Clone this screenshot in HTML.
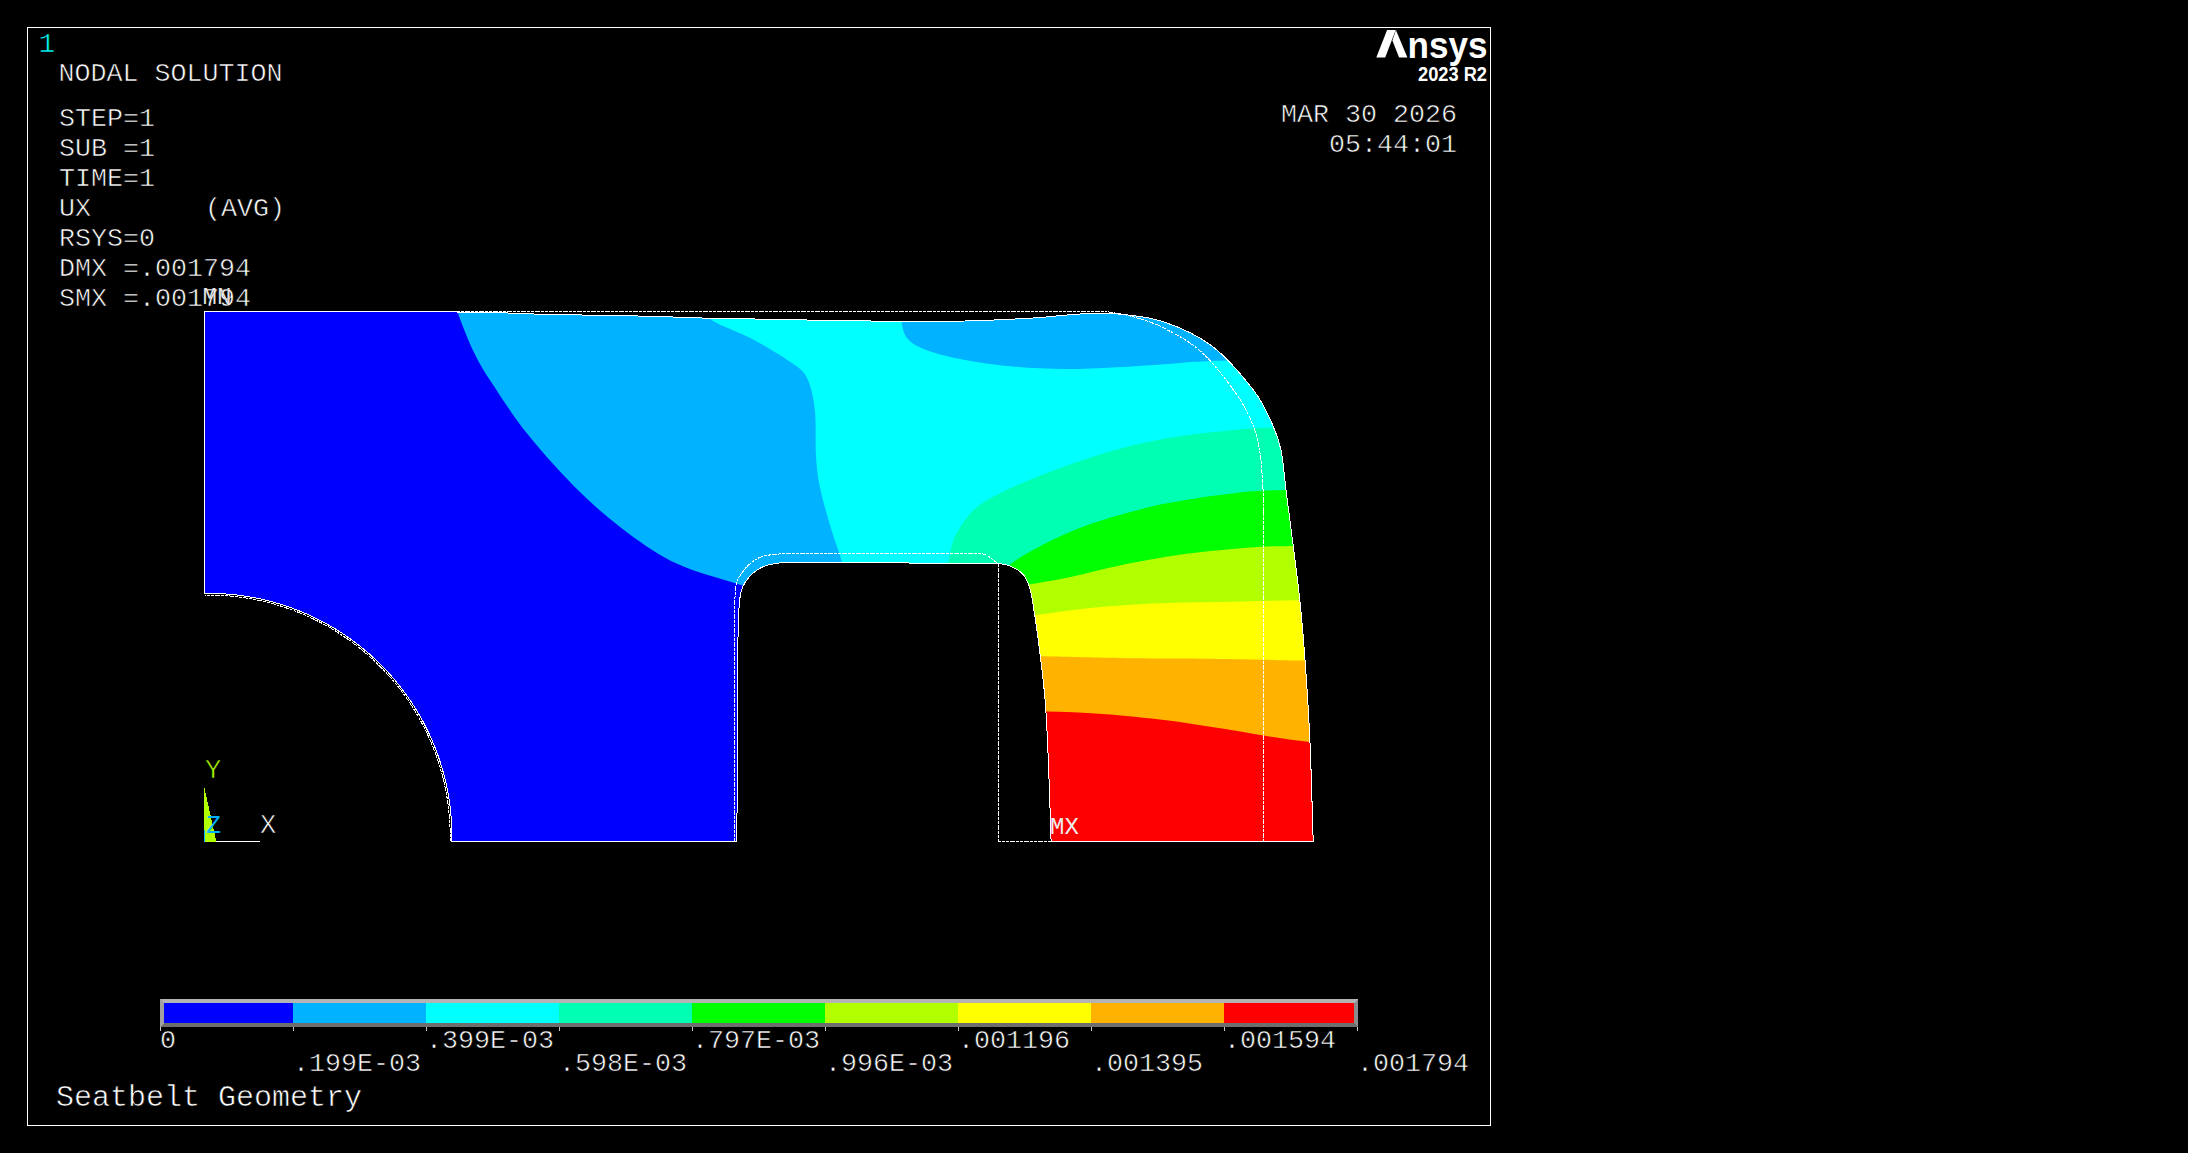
<!DOCTYPE html>
<html><head><meta charset="utf-8">
<style>
html,body{margin:0;padding:0;background:#000;width:2188px;height:1153px;overflow:hidden}
svg{position:absolute;left:0;top:0;display:block}
text{font-family:"Liberation Mono",monospace;white-space:pre;fill:#fff;stroke:#000;stroke-width:0.6px}
.t{font-size:26.67px}
.ns{stroke:none}
</style></head><body>
<svg width="2188" height="1153" viewBox="0 0 2188 1153" shape-rendering="crispEdges">
<rect x="0" y="0" width="2188" height="1153" fill="#000"/>
<rect x="27.5" y="27.5" width="1463" height="1098" fill="none" stroke="#fff" stroke-width="1"/>

<defs><clipPath id="cp"><path d="M204.50,311.50 C246.58,311.58 400.42,311.53 457.00,312.00 C513.58,312.47 513.00,313.62 544.00,314.30 C575.00,314.98 615.50,315.45 643.00,316.10 C670.50,316.75 685.17,317.63 709.00,318.20 C732.83,318.77 764.17,319.07 786.00,319.50 C807.83,319.93 821.00,320.52 840.00,320.80 C859.00,321.08 879.17,321.17 900.00,321.20 C920.83,321.23 942.83,321.53 965.00,321.00 C987.17,320.47 1013.83,319.17 1033.00,318.00 C1052.17,316.83 1065.83,314.67 1080.00,314.00 C1094.17,313.33 1104.12,312.72 1118.00,314.00 C1131.88,315.28 1147.65,316.37 1163.30,321.70 C1178.95,327.03 1196.87,334.58 1211.90,346.00 C1226.93,357.42 1243.38,377.05 1253.50,390.20 C1263.62,403.35 1267.98,414.78 1272.60,424.90 C1277.22,435.02 1278.97,440.05 1281.20,450.90 C1283.43,461.75 1284.00,474.17 1286.00,490.00 C1288.00,505.83 1290.87,527.25 1293.20,545.90 C1295.53,564.55 1298.03,582.97 1300.00,601.90 C1301.97,620.83 1303.35,636.43 1305.00,659.50 C1306.65,682.57 1308.53,710.05 1309.90,740.30 C1311.27,770.55 1312.65,824.22 1313.20,841.00 L1051.10,841.00 C1050.65,827.85 1049.32,784.52 1048.40,762.10 C1047.48,739.68 1046.77,722.70 1045.60,706.50 C1044.43,690.30 1043.02,678.77 1041.40,664.90 C1039.78,651.03 1037.75,635.78 1035.90,623.30 C1034.05,610.82 1032.38,598.10 1030.30,590.00 C1028.22,581.90 1026.63,578.63 1023.40,574.70 C1020.17,570.77 1015.30,568.30 1010.90,566.40 C1006.50,564.50 1005.48,563.83 997.00,563.30 C988.52,562.77 966.17,563.22 960.00,563.20 L800.00,562.60 C797.22,562.58 789.33,561.87 783.30,562.50 C777.27,563.13 769.35,564.13 763.80,566.40 C758.25,568.67 753.70,572.17 750.00,576.10 C746.30,580.03 743.45,584.45 741.60,590.00 C739.75,595.55 739.53,599.40 738.90,609.40 C738.27,619.40 738.03,633.82 737.80,650.00 C737.57,666.18 737.65,674.67 737.50,706.50 C737.35,738.33 737.00,818.58 736.90,841.00 L451.86,841.00 L451.90,837.74 L451.89,834.49 L451.84,831.23 L451.75,827.98 L451.61,824.73 L451.43,821.48 L451.21,818.23 L450.94,814.99 L450.63,811.75 L450.27,808.51 L449.87,805.28 L449.43,802.06 L448.95,798.84 L448.42,795.62 L447.85,792.42 L447.24,789.22 L446.59,786.03 L445.89,782.85 L445.15,779.68 L444.36,776.53 L443.54,773.38 L442.67,770.24 L441.76,767.11 L440.81,764.00 L439.82,760.90 L438.78,757.81 L437.71,754.74 L436.59,751.68 L435.44,748.64 L434.24,745.61 L433.00,742.60 L431.72,739.61 L430.40,736.63 L429.05,733.67 L427.65,730.74 L426.21,727.81 L424.74,724.91 L423.22,722.03 L421.67,719.17 L420.08,716.33 L418.45,713.51 L416.78,710.72 L415.08,707.94 L413.34,705.19 L411.56,702.46 L409.75,699.76 L407.90,697.08 L406.02,694.43 L404.10,691.80 L402.14,689.20 L400.15,686.62 L398.12,684.07 L396.07,681.55 L393.97,679.06 L391.85,676.59 L389.69,674.15 L387.50,671.75 L385.28,669.37 L383.02,667.02 L380.74,664.70 L378.42,662.42 L376.08,660.16 L373.70,657.93 L371.29,655.74 L368.86,653.58 L366.39,651.46 L363.90,649.36 L361.38,647.30 L358.84,645.27 L356.26,643.28 L353.66,641.32 L351.03,639.40 L348.38,637.51 L345.70,635.66 L343.00,633.85 L340.28,632.07 L337.53,630.32 L334.76,628.62 L331.96,626.95 L329.14,625.32 L326.30,623.73 L323.45,622.17 L320.57,620.65 L317.66,619.18 L314.74,617.74 L311.81,616.34 L308.85,614.98 L305.87,613.66 L302.88,612.38 L299.87,611.14 L296.85,609.94 L293.80,608.78 L290.75,607.66 L287.68,606.58 L284.59,605.54 L281.49,604.55 L278.38,603.60 L275.25,602.68 L272.12,601.81 L268.97,600.99 L265.81,600.20 L262.64,599.46 L259.46,598.76 L256.27,598.10 L253.08,597.48 L249.87,596.91 L246.66,596.38 L243.44,595.89 L240.22,595.45 L236.99,595.05 L233.75,594.69 L230.51,594.38 L227.27,594.11 L224.02,593.88 L220.77,593.70 L217.52,593.56 L214.27,593.46 L211.01,593.41 L207.76,593.40 L204.50,593.44 Z"/></clipPath></defs>
<g clip-path="url(#cp)" shape-rendering="geometricPrecision">
<rect x="200" y="300" width="1130" height="550" fill="#0000ff"/>
<path fill="#00b2ff" d="M457.70,305.00 C457.70,306.25 455.02,304.67 457.70,312.50 C460.38,320.33 468.08,340.20 473.80,352.00 C479.52,363.80 482.88,369.42 492.00,383.30 C501.12,397.18 513.83,417.17 528.50,435.30 C543.17,453.43 563.32,475.75 580.00,492.10 C596.68,508.45 612.42,521.45 628.60,533.40 C644.78,545.35 659.30,555.50 677.10,563.80 C694.90,572.10 721.58,578.83 735.40,583.20 C749.22,587.57 755.90,588.87 760.00,590.00 L760.00,900.00 L1400.00,900.00 L1400.00,305.00 Z"/>
<path fill="#00ffff" d="M709.40,300.00 C709.40,303.03 702.25,311.70 709.40,318.20 C716.55,324.70 738.65,331.62 752.30,339.00 C765.95,346.38 782.18,356.00 791.30,362.50 C800.42,369.00 803.08,370.20 807.00,378.00 C810.92,385.80 813.30,396.28 814.80,409.30 C816.30,422.32 815.13,443.08 816.00,456.10 C816.87,469.12 817.60,475.68 820.00,487.40 C822.40,499.12 827.15,515.35 830.40,526.40 C833.65,537.45 837.57,547.60 839.50,553.70 C841.43,559.80 841.08,558.62 842.00,563.00 C842.92,567.38 844.50,577.17 845.00,580.00 L845.00,900.00 L1400.00,900.00 L1400.00,359.00 C1371.55,359.25 1267.93,359.68 1229.30,360.50 C1190.67,361.32 1187.05,362.77 1168.20,363.90 C1149.35,365.03 1133.55,366.43 1116.20,367.30 C1098.85,368.17 1081.45,369.23 1064.10,369.10 C1046.75,368.97 1028.57,368.02 1012.10,366.50 C995.63,364.98 979.17,362.58 965.30,360.00 C951.43,357.42 938.45,354.47 928.90,351.00 C919.35,347.53 912.57,344.20 908.00,339.20 C903.43,334.20 902.58,327.53 901.50,321.00 C900.42,314.47 901.50,303.50 901.50,300.00 Z"/>
<path fill="#00ffb2" d="M945.00,580.00 C945.57,577.17 946.75,570.18 948.40,563.00 C950.05,555.82 950.35,546.02 954.90,536.90 C959.45,527.78 966.17,516.53 975.70,508.30 C985.23,500.07 997.37,494.43 1012.10,487.50 C1026.83,480.57 1046.75,472.98 1064.10,466.70 C1081.45,460.42 1098.85,454.57 1116.20,449.80 C1133.55,445.03 1150.87,441.13 1168.20,438.10 C1185.53,435.07 1202.52,433.37 1220.20,431.60 C1237.88,429.83 1244.33,428.43 1274.30,427.50 C1304.27,426.57 1379.05,426.25 1400.00,426.00 L1400.00,900.00 L945.00,900.00 Z"/>
<path fill="#00ff00" d="M1000.00,575.00 C1002.02,573.00 1005.75,567.62 1012.10,563.00 C1018.45,558.38 1027.27,552.95 1038.10,547.30 C1048.93,541.65 1064.08,534.30 1077.10,529.10 C1090.12,523.90 1101.02,520.43 1116.20,516.10 C1131.38,511.77 1148.55,506.92 1168.20,503.10 C1187.85,499.28 1214.33,495.40 1234.10,493.20 C1253.87,491.00 1259.15,490.60 1286.80,489.90 C1314.45,489.20 1381.13,489.15 1400.00,489.00 L1400.00,900.00 L1000.00,900.00 Z"/>
<path fill="#b2ff00" d="M1000.00,590.00 C1004.83,589.08 1017.43,586.63 1029.00,584.50 C1040.57,582.37 1054.43,580.33 1069.40,577.20 C1084.37,574.07 1099.58,569.55 1118.80,565.70 C1138.02,561.85 1162.73,557.13 1184.70,554.10 C1206.67,551.07 1232.48,548.87 1250.60,547.50 C1268.72,546.13 1268.50,546.32 1293.40,545.90 C1318.30,545.48 1382.23,545.15 1400.00,545.00 L1400.00,900.00 L1000.00,900.00 Z"/>
<path fill="#ffff00" d="M1000.00,616.00 C1005.80,615.83 1020.48,616.25 1034.80,615.00 C1049.12,613.75 1066.40,610.42 1085.90,608.50 C1105.40,606.58 1129.83,604.60 1151.80,603.50 C1173.77,602.40 1193.00,602.45 1217.70,601.90 C1242.40,601.35 1269.62,600.52 1300.00,600.20 C1330.38,599.88 1383.33,600.03 1400.00,600.00 L1400.00,900.00 L1000.00,900.00 Z"/>
<path fill="#ffb200" d="M1000.00,656.00 C1006.73,656.03 1020.60,655.88 1040.40,656.20 C1060.20,656.52 1094.75,657.50 1118.80,657.90 C1142.85,658.30 1162.73,658.33 1184.70,658.60 C1206.67,658.87 1230.55,659.18 1250.60,659.50 C1270.65,659.82 1280.10,660.25 1305.00,660.50 C1329.90,660.75 1384.17,660.92 1400.00,661.00 L1400.00,900.00 L1000.00,900.00 Z"/>
<path fill="#ff0000" d="M1000.00,711.00 C1007.73,711.10 1029.33,711.12 1046.40,711.60 C1063.47,712.08 1082.10,712.42 1102.40,713.90 C1122.70,715.38 1146.25,717.75 1168.20,720.50 C1190.15,723.25 1210.48,726.83 1234.10,730.40 C1257.72,733.97 1282.25,739.80 1309.90,741.90 C1337.55,744.00 1384.98,742.82 1400.00,743.00 L1400.00,900.00 L1000.00,900.00 Z"/>
</g>
<g fill="none" stroke="#fff" stroke-width="1" shape-rendering="crispEdges">
<path d="M204.50,311.50 C246.58,311.58 400.42,311.53 457.00,312.00 C513.58,312.47 513.00,313.62 544.00,314.30 C575.00,314.98 615.50,315.45 643.00,316.10 C670.50,316.75 685.17,317.63 709.00,318.20 C732.83,318.77 764.17,319.07 786.00,319.50 C807.83,319.93 821.00,320.52 840.00,320.80 C859.00,321.08 879.17,321.17 900.00,321.20 C920.83,321.23 942.83,321.53 965.00,321.00 C987.17,320.47 1013.83,319.17 1033.00,318.00 C1052.17,316.83 1065.83,314.67 1080.00,314.00 C1094.17,313.33 1104.12,312.72 1118.00,314.00 C1131.88,315.28 1147.65,316.37 1163.30,321.70 C1178.95,327.03 1196.87,334.58 1211.90,346.00 C1226.93,357.42 1243.38,377.05 1253.50,390.20 C1263.62,403.35 1267.98,414.78 1272.60,424.90 C1277.22,435.02 1278.97,440.05 1281.20,450.90 C1283.43,461.75 1284.00,474.17 1286.00,490.00 C1288.00,505.83 1290.87,527.25 1293.20,545.90 C1295.53,564.55 1298.03,582.97 1300.00,601.90 C1301.97,620.83 1303.35,636.43 1305.00,659.50 C1306.65,682.57 1308.53,710.05 1309.90,740.30 C1311.27,770.55 1312.65,824.22 1313.20,841.00 L1051.10,841.00 C1050.65,827.85 1049.32,784.52 1048.40,762.10 C1047.48,739.68 1046.77,722.70 1045.60,706.50 C1044.43,690.30 1043.02,678.77 1041.40,664.90 C1039.78,651.03 1037.75,635.78 1035.90,623.30 C1034.05,610.82 1032.38,598.10 1030.30,590.00 C1028.22,581.90 1026.63,578.63 1023.40,574.70 C1020.17,570.77 1015.30,568.30 1010.90,566.40 C1006.50,564.50 1005.48,563.83 997.00,563.30 C988.52,562.77 966.17,563.22 960.00,563.20 L800.00,562.60 C797.22,562.58 789.33,561.87 783.30,562.50 C777.27,563.13 769.35,564.13 763.80,566.40 C758.25,568.67 753.70,572.17 750.00,576.10 C746.30,580.03 743.45,584.45 741.60,590.00 C739.75,595.55 739.53,599.40 738.90,609.40 C738.27,619.40 738.03,633.82 737.80,650.00 C737.57,666.18 737.65,674.67 737.50,706.50 C737.35,738.33 737.00,818.58 736.90,841.00 L451.86,841.00 L451.90,837.74 L451.89,834.49 L451.84,831.23 L451.75,827.98 L451.61,824.73 L451.43,821.48 L451.21,818.23 L450.94,814.99 L450.63,811.75 L450.27,808.51 L449.87,805.28 L449.43,802.06 L448.95,798.84 L448.42,795.62 L447.85,792.42 L447.24,789.22 L446.59,786.03 L445.89,782.85 L445.15,779.68 L444.36,776.53 L443.54,773.38 L442.67,770.24 L441.76,767.11 L440.81,764.00 L439.82,760.90 L438.78,757.81 L437.71,754.74 L436.59,751.68 L435.44,748.64 L434.24,745.61 L433.00,742.60 L431.72,739.61 L430.40,736.63 L429.05,733.67 L427.65,730.74 L426.21,727.81 L424.74,724.91 L423.22,722.03 L421.67,719.17 L420.08,716.33 L418.45,713.51 L416.78,710.72 L415.08,707.94 L413.34,705.19 L411.56,702.46 L409.75,699.76 L407.90,697.08 L406.02,694.43 L404.10,691.80 L402.14,689.20 L400.15,686.62 L398.12,684.07 L396.07,681.55 L393.97,679.06 L391.85,676.59 L389.69,674.15 L387.50,671.75 L385.28,669.37 L383.02,667.02 L380.74,664.70 L378.42,662.42 L376.08,660.16 L373.70,657.93 L371.29,655.74 L368.86,653.58 L366.39,651.46 L363.90,649.36 L361.38,647.30 L358.84,645.27 L356.26,643.28 L353.66,641.32 L351.03,639.40 L348.38,637.51 L345.70,635.66 L343.00,633.85 L340.28,632.07 L337.53,630.32 L334.76,628.62 L331.96,626.95 L329.14,625.32 L326.30,623.73 L323.45,622.17 L320.57,620.65 L317.66,619.18 L314.74,617.74 L311.81,616.34 L308.85,614.98 L305.87,613.66 L302.88,612.38 L299.87,611.14 L296.85,609.94 L293.80,608.78 L290.75,607.66 L287.68,606.58 L284.59,605.54 L281.49,604.55 L278.38,603.60 L275.25,602.68 L272.12,601.81 L268.97,600.99 L265.81,600.20 L262.64,599.46 L259.46,598.76 L256.27,598.10 L253.08,597.48 L249.87,596.91 L246.66,596.38 L243.44,595.89 L240.22,595.45 L236.99,595.05 L233.75,594.69 L230.51,594.38 L227.27,594.11 L224.02,593.88 L220.77,593.70 L217.52,593.56 L214.27,593.46 L211.01,593.41 L207.76,593.40 L204.50,593.44 Z"/>
<path stroke-dasharray="3,1,3,1,5,1" d="M204.5,311.5 L1106,311.5 C1110.33,312.33 1122.45,313.78 1132.00,316.50 C1141.55,319.22 1151.73,321.88 1163.30,327.80 C1174.87,333.72 1189.27,341.02 1201.40,352.00 C1213.53,362.98 1227.42,381.27 1236.10,393.70 C1244.78,406.13 1249.45,416.20 1253.50,426.60 C1257.55,437.00 1258.72,443.87 1260.40,456.10 C1262.08,468.33 1263.07,489.35 1263.60,500.00 C1264.13,510.65 1263.60,516.67 1263.60,520.00 L1263.6,841"/>
<path stroke-dasharray="3,1,3,1,5,1" d="M1051,841 L998.5,841 L998.5,575 C998.50,573.42 999.22,567.87 998.50,565.50 C997.78,563.13 996.77,562.72 994.20,560.80 C991.63,558.88 988.80,555.17 983.10,554.00 C977.40,552.83 963.85,553.83 960.00,553.80 L779,554 C776.18,554.42 766.93,554.87 762.10,556.50 C757.27,558.13 753.43,560.97 750.00,563.80 C746.57,566.63 743.73,570.27 741.50,573.50 C739.27,576.73 737.72,578.78 736.60,583.20 C735.48,587.62 735.15,594.70 734.80,600.00 C734.45,605.30 734.55,612.50 734.50,615.00 L734.5,841"/>
<path stroke-dasharray="3,1,3,1,5,1" d="M450.16,840.97 L450.20,837.74 L450.19,834.50 L450.14,831.27 L450.05,828.04 L449.91,824.81 L449.73,821.58 L449.51,818.36 L449.24,815.14 L448.94,811.92 L448.58,808.71 L448.19,805.50 L447.75,802.30 L447.27,799.10 L446.75,795.91 L446.18,792.73 L445.57,789.55 L444.92,786.39 L444.23,783.23 L443.49,780.08 L442.72,776.95 L441.90,773.82 L441.04,770.70 L440.13,767.60 L439.19,764.51 L438.20,761.43 L437.18,758.36 L436.11,755.31 L435.00,752.28 L433.85,749.26 L432.66,746.25 L431.43,743.26 L430.16,740.29 L428.85,737.33 L427.51,734.39 L426.12,731.48 L424.69,728.57 L423.23,725.69 L421.72,722.83 L420.18,719.99 L418.60,717.17 L416.98,714.37 L415.33,711.60 L413.64,708.84 L411.91,706.11 L410.15,703.40 L408.34,700.72 L406.51,698.06 L404.64,695.42 L402.73,692.81 L400.79,690.23 L398.81,687.67 L396.80,685.14 L394.76,682.64 L392.68,680.16 L390.57,677.71 L388.43,675.29 L386.25,672.90 L384.04,670.54 L381.81,668.21 L379.54,665.90 L377.24,663.63 L374.91,661.39 L372.55,659.18 L370.16,657.01 L367.74,654.86 L365.29,652.75 L362.82,650.67 L360.32,648.62 L357.79,646.61 L355.23,644.63 L352.65,642.69 L350.04,640.78 L347.41,638.91 L344.75,637.07 L342.06,635.26 L339.36,633.50 L336.63,631.77 L333.87,630.07 L331.10,628.42 L328.30,626.80 L325.48,625.21 L322.64,623.67 L319.78,622.16 L316.90,620.70 L314.00,619.27 L311.09,617.88 L308.15,616.53 L305.19,615.22 L302.22,613.94 L299.23,612.71 L296.23,611.52 L293.21,610.37 L290.17,609.26 L287.12,608.19 L284.06,607.16 L280.98,606.17 L277.89,605.22 L274.79,604.32 L271.67,603.45 L268.55,602.63 L265.41,601.85 L262.26,601.11 L259.11,600.42 L255.94,599.77 L252.77,599.15 L249.59,598.59 L246.40,598.06 L243.20,597.58 L240.00,597.14 L236.79,596.74 L233.58,596.38 L230.36,596.07 L227.14,595.80 L223.91,595.58 L220.69,595.40 L217.46,595.26 L214.23,595.16 L210.99,595.11 L207.76,595.10 L204.53,595.14"/>
</g>

<rect x="160" y="999" width="133" height="28" fill="#0000ff"/>
<rect x="293" y="999" width="133" height="28" fill="#00b2ff"/>
<rect x="426" y="999" width="133" height="28" fill="#00ffff"/>
<rect x="559" y="999" width="133" height="28" fill="#00ffb2"/>
<rect x="692" y="999" width="133" height="28" fill="#00ff00"/>
<rect x="825" y="999" width="133" height="28" fill="#b2ff00"/>
<rect x="958" y="999" width="133" height="28" fill="#ffff00"/>
<rect x="1091" y="999" width="133" height="28" fill="#ffb200"/>
<rect x="1224" y="999" width="134" height="28" fill="#ff0000"/>
<polygon fill="#b4b4b4" points="160,999 1358,999 1354,1003 164,1003"/>
<polygon fill="#a0a0a0" points="160,999 164,1003 164,1023 160,1027"/>
<polygon fill="#6e6e6e" points="160,1027 164,1023 1354,1023 1358,1027"/>
<polygon fill="#8c8c8c" points="1358,999 1354,1003 1354,1023 1358,1027"/>
<rect x="160" y="1027" width="1" height="4" fill="#c8c8c8"/>
<rect x="293" y="1027" width="1" height="4" fill="#c8c8c8"/>
<rect x="426" y="1027" width="1" height="4" fill="#c8c8c8"/>
<rect x="559" y="1027" width="1" height="4" fill="#c8c8c8"/>
<rect x="692" y="1027" width="1" height="4" fill="#c8c8c8"/>
<rect x="825" y="1027" width="1" height="4" fill="#c8c8c8"/>
<rect x="958" y="1027" width="1" height="4" fill="#c8c8c8"/>
<rect x="1091" y="1027" width="1" height="4" fill="#c8c8c8"/>
<rect x="1224" y="1027" width="1" height="4" fill="#c8c8c8"/>
<rect x="1357" y="1027" width="1" height="4" fill="#c8c8c8"/>
<text class="t" x="160" y="1048">0</text>
<text class="t" x="293" y="1071">.199E-03</text>
<text class="t" x="426" y="1048">.399E-03</text>
<text class="t" x="559" y="1071">.598E-03</text>
<text class="t" x="692" y="1048">.797E-03</text>
<text class="t" x="825" y="1071">.996E-03</text>
<text class="t" x="958" y="1048">.001196</text>
<text class="t" x="1091" y="1071">.001395</text>
<text class="t" x="1224" y="1048">.001594</text>
<text class="t" x="1357" y="1071">.001794</text>

<polygon fill="#b2ff00" points="204,786 204,842 216.5,842"/>
<rect x="204" y="830" width="1" height="12" fill="#00b2ff"/>
<rect x="216" y="840.5" width="44" height="1.5" fill="#fff"/>
<text style="font-size:27px;fill:#b2ff00" x="205" y="778">Y</text>
<text class="ns" style="font-size:25px;fill:#00b2ff" x="206" y="833">Z</text>
<text style="font-size:27px" x="260" y="833">X</text>
<text class="ns" style="font-size:24px;fill:#eee" x="1050" y="834">MX</text>


<g shape-rendering="geometricPrecision">
<polygon fill="#fff" points="1376.3,57.6 1385.2,57.6 1395.7,30.1 1387.1,30.1"/>
<polygon fill="#fff" points="1395.9,30.1 1407.4,57.6 1399.1,57.6 1392.4,40.5"/>
<text class="ns" style="font-family:'Liberation Sans',sans-serif;font-weight:bold;font-size:36px" x="1407.5" y="57.6" textLength="80" lengthAdjust="spacingAndGlyphs">nsys</text>
<text class="ns" style="font-family:'Liberation Sans',sans-serif;font-weight:bold;font-size:19.5px" x="1418" y="81.3" textLength="69" lengthAdjust="spacingAndGlyphs">2023 R2</text>
</g>

<g>
<text style="font-size:28px;fill:#00ffff" x="38.5" y="52">1</text>
<text class="t" x="58.5" y="81">NODAL SOLUTION</text>
<text class="t" x="59" y="126">STEP=1</text>
<text class="t" x="59" y="156">SUB =1</text>
<text class="t" x="59" y="186">TIME=1</text>
<text class="t" x="59" y="216">UX</text>
<text class="t" x="205" y="216">(AVG)</text>
<text class="t" x="59" y="246">RSYS=0</text>
<text class="t" x="59" y="276">DMX =.001794</text>
<text class="t" x="59" y="306">SMX =.001794</text>
<text class="t" x="1281" y="122.4">MAR 30 2026</text>
<text class="t" x="1329" y="152.2">05:44:01</text>
<text style="font-size:30px" x="56" y="1106">Seatbelt Geometry</text>
</g>
<text class="ns" style="font-size:24px;fill:#e0e0e0" x="202.5" y="304">MN</text>
</svg>
</body></html>
